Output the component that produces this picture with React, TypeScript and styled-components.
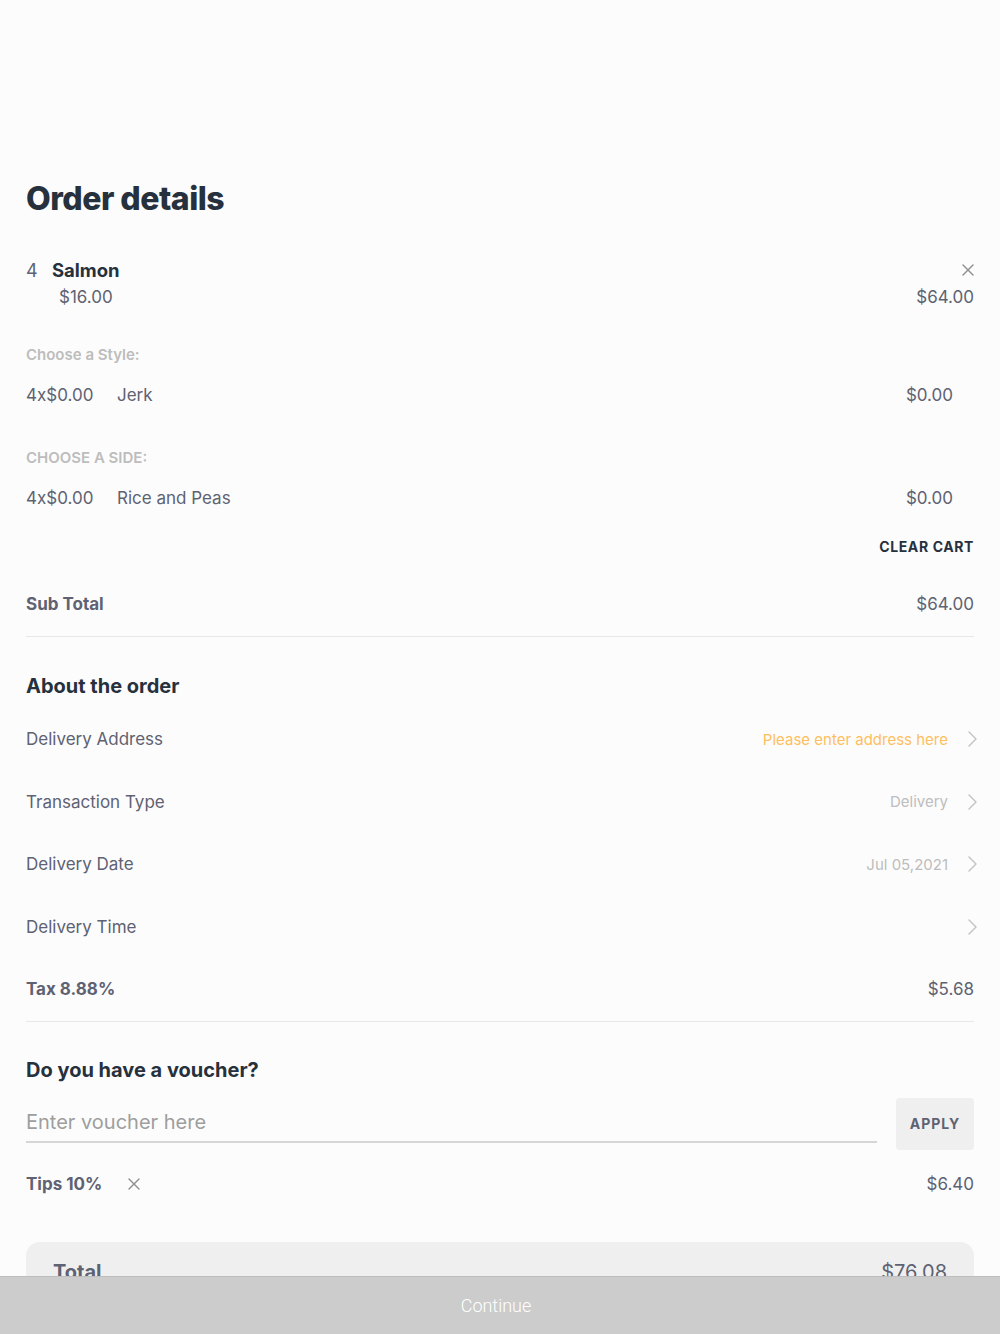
import React from 'react'
import styled, { createGlobalStyle } from 'styled-components'

const font = `Inter, "Open Sans", sans-serif`

const GlobalStyle = createGlobalStyle`
    body {
        margin: 0;
        background: #fcfcfc;
        font-family: ${font};
    }
`

const Close = ({ size = 12 }: { size?: number }) => (
    <svg width={size} height={size} viewBox="0 0 12 12" fill="none">
        <path d="M1 1 L11 11 M11 1 L1 11" stroke="#8c8c8c" strokeWidth="1.4" strokeLinecap="round" />
    </svg>
)

const Chevron = () => (
    <svg width="10" height="16" viewBox="0 0 10 16" fill="none">
        <path d="M2 1 L9 8 L2 15" stroke="#c2c2c2" strokeWidth="1.4" strokeLinecap="round" strokeLinejoin="round" />
    </svg>
)

const infoRows = [
    { label: 'Delivery Address', value: 'Please enter address here', warn: true },
    { label: 'Transaction Type', value: 'Delivery' },
    { label: 'Delivery Date', value: 'Jul 05,2021' },
    { label: 'Delivery Time', value: '' },
]

export default function App() {
    return (
        <>
            <GlobalStyle />
            <Page>
                <Title>Order details</Title>

                <ItemHead>
                    <Qty>4</Qty>
                    <ItemName>Salmon</ItemName>
                    <Spacer />
                    <IconButton><Close /></IconButton>
                </ItemHead>
                <ItemSub>
                    <UnitPrice>$16.00</UnitPrice>
                    <Amount>$64.00</Amount>
                </ItemSub>

                <OptionLabel>Choose a Style:</OptionLabel>
                <OptionRow>
                    <OptionPrice>4x$0.00</OptionPrice>
                    <OptionName>Jerk</OptionName>
                    <Spacer />
                    <Amount>$0.00</Amount>
                </OptionRow>

                <OptionLabel>CHOOSE A SIDE:</OptionLabel>
                <OptionRow>
                    <OptionPrice>4x$0.00</OptionPrice>
                    <OptionName>Rice and Peas</OptionName>
                    <Spacer />
                    <Amount>$0.00</Amount>
                </OptionRow>

                <ClearCart>CLEAR CART</ClearCart>

                <SumRow>
                    <SumLabel>Sub Total</SumLabel>
                    <Amount>$64.00</Amount>
                </SumRow>
                <Divider />

                <SectionTitle $top={35}>About the order</SectionTitle>
                {infoRows.map((r, i) => (
                    <InfoRow key={r.label} $first={i === 0}>
                        <InfoLabel>{r.label}</InfoLabel>
                        <Spacer />
                        <InfoValue $warn={r.warn}>{r.value}</InfoValue>
                        <ChevronBox><Chevron /></ChevronBox>
                    </InfoRow>
                ))}
                <InfoRow>
                    <SumLabel>Tax 8.88%</SumLabel>
                    <Spacer />
                    <Amount>$5.68</Amount>
                </InfoRow>
                <Divider />

                <SectionTitle $top={34}>Do you have a voucher?</SectionTitle>
                <VoucherRow>
                    <VoucherInput placeholder="Enter voucher here" />
                    <ApplyButton>APPLY</ApplyButton>
                </VoucherRow>

                <TipsRow>
                    <SumLabel>Tips 10%</SumLabel>
                    <IconButton $left={26}><Close /></IconButton>
                    <Spacer />
                    <Amount>$6.40</Amount>
                </TipsRow>

                <TotalCard>
                    <TotalLabel>Total</TotalLabel>
                    <TotalAmount>$76.08</TotalAmount>
                </TotalCard>
            </Page>
            <BottomBar>Continue</BottomBar>
        </>
    )
}

const Page = styled.div`
    padding: 170px 26px 60px;
    display: flex;
    flex-direction: column;
`
const Title = styled.h1`
    margin: 0;
    height: 58px;
    line-height: 58px;
    font-size: 32px;
    font-weight: 800;
    color: #26313d;
    letter-spacing: -0.5px;
`
const Spacer = styled.div`
    flex: 1;
`
const ItemHead = styled.div`
    margin-top: 28px;
    height: 28px;
    display: flex;
    align-items: center;
`
const Qty = styled.span`
    font-size: 18px;
    color: #5e6272;
    width: 26px;
`
const ItemName = styled.span`
    font-size: 18.5px;
    font-weight: 700;
    color: #26313d;
`
const IconButton = styled.span<{ $left?: number }>`
    display: flex;
    align-items: center;
    margin-left: ${p => p.$left ?? 0}px;
`
const ItemSub = styled.div`
    height: 26px;
    display: flex;
    align-items: center;
    justify-content: space-between;
`
const UnitPrice = styled.span`
    padding-left: 33px;
    font-size: 17px;
    color: #5e6272;
`
const Amount = styled.span`
    font-size: 17px;
    color: #5e6272;
`
const OptionLabel = styled.div`
    margin-top: 33px;
    height: 24px;
    line-height: 24px;
    font-size: 15px;
    font-weight: 600;
    color: #bdbdbd;
    & + div + & {
        margin-top: 36px;
    }
`
const OptionRow = styled.div`
    margin-top: 13px;
    height: 30px;
    display: flex;
    align-items: center;
    padding-right: 21px;
`
const OptionPrice = styled.span`
    font-size: 17px;
    color: #5e6272;
    width: 91px;
`
const OptionName = styled.span`
    font-size: 17px;
    color: #5e6272;
`
const ClearCart = styled.div`
    margin-top: 22px;
    height: 24px;
    line-height: 24px;
    align-self: flex-end;
    font-size: 14px;
    font-weight: 700;
    letter-spacing: 0.6px;
    color: #26313d;
`
const SumRow = styled.div`
    margin-top: 31px;
    height: 28px;
    display: flex;
    align-items: center;
    justify-content: space-between;
`
const SumLabel = styled.span`
    font-size: 17px;
    font-weight: 700;
    color: #5e6272;
`
const Divider = styled.div`
    margin-top: 18px;
    height: 1px;
    background: #e8e8e8;
`
const SectionTitle = styled.h2<{ $top?: number }>`
    margin: ${p => p.$top ?? 34}px 0 0;
    height: 28px;
    line-height: 28px;
    font-size: 20px;
    font-weight: 700;
    color: #26313d;
`
const InfoRow = styled.div<{ $first?: boolean }>`
    margin-top: ${p => (p.$first ? 8 : 0)}px;
    height: 62.5px;
    display: flex;
    align-items: center;
    & + ${Divider} {
        margin-top: 0;
    }
`
const InfoLabel = styled.span`
    font-size: 17px;
    color: #5e6272;
`
const InfoValue = styled.span<{ $warn?: boolean }>`
    font-size: 15px;
    color: ${p => (p.$warn ? '#ffbf5e' : '#bdbdbd')};
`
const ChevronBox = styled.span`
    display: flex;
    margin-left: 19px;
    margin-right: -3px;
`
const VoucherRow = styled.div`
    margin-top: 14px;
    display: flex;
    align-items: flex-start;
    gap: 19px;
`
const VoucherInput = styled.input`
    flex: 1;
    height: 45px;
    box-sizing: border-box;
    padding: 6px 0 0;
    border: none;
    border-bottom: 2px solid #d6d6d6;
    background: transparent;
    font-family: ${font};
    font-size: 20px;
    color: #5e6272;
    outline: none;
    &::placeholder {
        color: #9e9e9e;
    }
`
const ApplyButton = styled.button`
    width: 78px;
    height: 52px;
    border: none;
    border-radius: 4px;
    background: #efefef;
    font-family: ${font};
    font-size: 14px;
    font-weight: 700;
    letter-spacing: 1px;
    color: #5e6272;
    cursor: pointer;
`
const TipsRow = styled.div`
    margin-top: 20px;
    height: 28px;
    display: flex;
    align-items: center;
`
const TotalCard = styled.div`
    margin-top: 44px;
    height: 96px;
    border-radius: 14px;
    background: #efefef;
    padding: 16px 27px 0;
    box-sizing: border-box;
    display: flex;
    justify-content: space-between;
    align-items: flex-start;
`
const TotalLabel = styled.span`
    font-size: 20px;
    font-weight: 700;
    color: #5e6272;
    line-height: 28px;
`
const TotalAmount = styled.span`
    font-size: 20px;
    color: #5e6272;
    line-height: 28px;
`
const BottomBar = styled.div`
    position: fixed;
    left: 0;
    right: 0;
    bottom: 0;
    height: 57px;
    border-top: 1px solid #bdbdbd;
    background: #cccccc;
    display: flex;
    align-items: center;
    justify-content: center;
    padding-right: 8px;
    font-family: Roboto, sans-serif;
    font-weight: 300;
    font-size: 18px;
    color: #ffffff;
`
